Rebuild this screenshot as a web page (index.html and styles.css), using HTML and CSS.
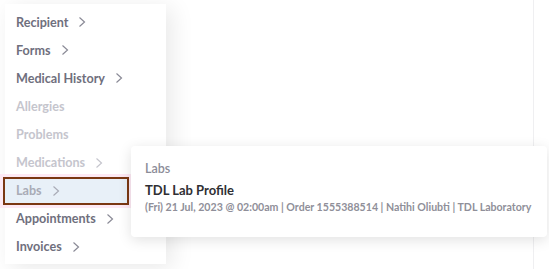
FILE: index.html
```html
<!DOCTYPE html>
<html lang="en">
<head>
    <meta charset="UTF-8">
    <title>Patient menu</title>
    <link rel="stylesheet" href="styles.css">
</head>
<body>
    <div class="page">
        <ul class="menu">
            <li class="menu__item">Recipient <svg class="menu__chevron" viewBox="0 0 8 12"><path d="M1.5 1.5 6.5 6 1.5 10.5"/></svg></li>
            <li class="menu__item">Forms <svg class="menu__chevron" viewBox="0 0 8 12"><path d="M1.5 1.5 6.5 6 1.5 10.5"/></svg></li>
            <li class="menu__item">Medical History <svg class="menu__chevron" viewBox="0 0 8 12"><path d="M1.5 1.5 6.5 6 1.5 10.5"/></svg></li>
            <li class="menu__item menu__item--disabled">Allergies</li>
            <li class="menu__item menu__item--disabled">Problems</li>
            <li class="menu__item menu__item--disabled">Medications <svg class="menu__chevron" viewBox="0 0 8 12"><path d="M1.5 1.5 6.5 6 1.5 10.5"/></svg></li>
            <li class="menu__item menu__item--active">Labs <svg class="menu__chevron" viewBox="0 0 8 12"><path d="M1.5 1.5 6.5 6 1.5 10.5"/></svg></li>
            <li class="menu__item">Appointments <svg class="menu__chevron" viewBox="0 0 8 12"><path d="M1.5 1.5 6.5 6 1.5 10.5"/></svg></li>
            <li class="menu__item">Invoices <svg class="menu__chevron" viewBox="0 0 8 12"><path d="M1.5 1.5 6.5 6 1.5 10.5"/></svg></li>
        </ul>

        <div class="popover">
            <div class="popover__heading">Labs</div>
            <div class="popover__title">TDL Lab Profile</div>
            <div class="popover__meta">(Fri) 21 Jul, 2023 @ 02:00am | Order 1555388514 | Natihi Oliubti | TDL Laboratory</div>
        </div>
    </div>
</body>
</html>
```

FILE: styles.css
```css
html {
    background-color: #fff;
    font-family: Lato, "Noto Sans", sans-serif;
}

body {
    margin: 0;
}

.page {
    height: 269px;
    overflow: hidden;
    position: relative;
}

/* faint divider of the panel behind the popover */
.page::after {
    background-color: #efeff1;
    content: "";
    height: 100%;
    left: 533px;
    position: absolute;
    top: 0;
    width: 1px;
}

.menu {
    background-color: #fff;
    box-shadow: 6px 4px 22px rgba(0, 0, 0, 0.09);
    list-style: none;
    margin: 4px 0 0 5px;
    padding: 4px 0 3px;
    width: 161px;
}

.menu__item {
    align-items: center;
    color: #6f6f7d;
    display: flex;
    font-size: 12.6px;
    font-weight: 700;
    gap: 10px;
    height: 28.1px;
    padding-left: 11px;
}

.menu__chevron {
    fill: none;
    height: 12px;
    stroke: #8a8a96;
    stroke-width: 1.2;
    width: 8px;
}

.menu__item--disabled {
    color: #c5c5cd;
}

.menu__item--disabled .menu__chevron {
    stroke: #c5c5cd;
}

.menu__item--active {
    background-color: #e8f0f8;
    border: 2px solid #7a3712;
    box-shadow: 0 0 0 3px #fde9f4;
    box-sizing: border-box;
    color: #a9abb6;
    margin-left: -2px;
    padding-left: 11px;
    width: 126px;
}

.menu__item--active .menu__chevron {
    stroke: #a9abb6;
}

.popover {
    background-color: #fff;
    border-radius: 4px;
    box-shadow: 0 3px 14px rgba(0, 0, 0, 0.12);
    box-sizing: border-box;
    height: 91px;
    left: 131px;
    padding: 15px 0 0 14px;
    position: absolute;
    top: 146px;
    width: 416px;
    z-index: 1;
}

.popover__heading {
    color: #8c8c98;
    font-size: 12.5px;
    font-weight: 600;
    line-height: 16px;
}

.popover__title {
    color: #2f2f33;
    font-size: 13px;
    font-weight: 700;
    line-height: 18px;
    margin-top: 4px;
}

.popover__meta {
    color: #8f8f99;
    font-size: 10.6px;
    font-weight: 700;
    line-height: 16px;
    white-space: nowrap;
}
```
